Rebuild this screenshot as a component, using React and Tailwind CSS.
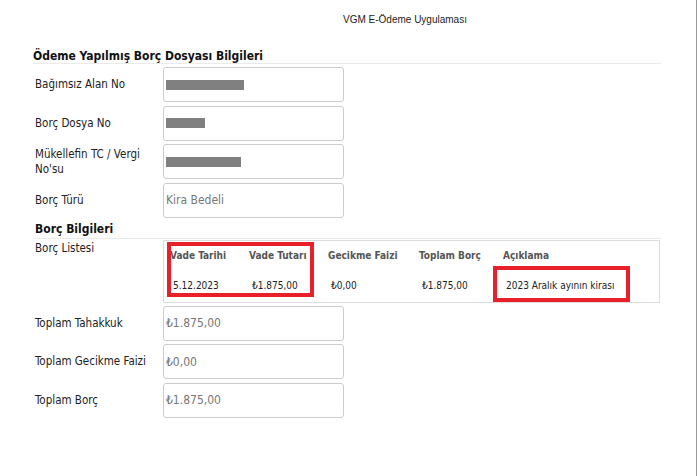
import React from 'react';

const font = { fontFamily: '"DejaVu Sans Condensed", "DejaVu Sans", Verdana, sans-serif' };

const fields = [
  { label: 'Bağımsız Alan No', mask: 'w-[78px]' },
  { label: 'Borç Dosya No', mask: 'w-[39px]' },
  { label: "Mükellefin TC / Vergi No'su", mask: 'w-[75px]' },
  { label: 'Borç Türü', value: 'Kira Bedeli' },
];

const totals = [
  { label: 'Toplam Tahakkuk', value: '₺1.875,00' },
  { label: 'Toplam Gecikme Faizi', value: '₺0,00' },
  { label: 'Toplam Borç', value: '₺1.875,00' },
];

const columns = [
  { head: 'Vade Tarihi', value: '5.12.2023', w: 'w-[79px]' },
  { head: 'Vade Tutarı', value: '₺1.875,00', w: 'w-[79px]' },
  { head: 'Gecikme Faizi', value: '₺0,00', w: 'w-[91px]' },
  { head: 'Toplam Borç', value: '₺1.875,00', w: 'w-[84px]' },
  { head: 'Açıklama', value: '2023 Aralık ayının kirası', w: 'flex-1' },
];

const Row = ({ label, children }) => (
  <div className="flex items-center h-[35px]">
    <div className="w-[128px] text-[11.5px] leading-[15px] text-[#222] pr-2">{label}</div>
    {children}
  </div>
);

const Box = ({ children }) => (
  <div className="w-[181px] h-[35px] border border-[#ccc] rounded-[3px] flex items-center pl-[2px] text-[12px] text-[#777]">
    {children}
  </div>
);

export default function App() {
  return (
    <div className="relative w-[697px] h-[476px] bg-white border-r border-[#999] overflow-hidden" style={font}>
      <div className="pt-[14px] pl-[343px] h-[50px] text-[10px] leading-[12px] text-[#222]" style={{ fontFamily: '"Liberation Sans", Arial, sans-serif' }}>
        VGM E-Ödeme Uygulaması
      </div>

      <div className="pl-[33px] pr-[35px]">
        <h2 className="text-[12px] leading-[13px] font-bold text-[#111] border-b border-[#eaeaea]">
          Ödeme Yapılmış Borç Dosyası Bilgileri
        </h2>

        <div className="flex flex-col gap-[3.5px] mt-[3px] pl-[2px]">
          {fields.map((f) => (
            <Row key={f.label} label={f.label}>
              <Box>
                {f.mask ? <div className={`${f.mask} h-[10px] bg-[#808080]`} /> : f.value}
              </Box>
            </Row>
          ))}
        </div>

        <h2 className="mt-[3px] pl-[2px] text-[12px] leading-[16px] font-bold text-[#111] border-b border-[#eaeaea] pb-[1px]">
          Borç Bilgileri
        </h2>

        <div className="flex pl-[2px] mt-[1px]">
          <div className="w-[128px] text-[11.5px] leading-[15px] text-[#222] pt-[1px]">Borç Listesi</div>
          <div className="w-[497px] h-[63px] border border-[#ddd] pl-[6px]">
            <div className="flex pt-[8px] text-[10px] leading-[14px] font-bold text-[#555]">
              {columns.map((c) => (
                <div key={c.head} className={c.w}>{c.head}</div>
              ))}
            </div>
            <div className="flex pt-[16px] text-[10px] leading-[14px] text-[#222]">
              {columns.map((c) => (
                <div key={c.head} className={`${c.w} pl-[3px]`}>{c.value}</div>
              ))}
            </div>
          </div>
        </div>

        <div className="flex flex-col gap-[3.5px] mt-[3px] pl-[2px]">
          {totals.map((t) => (
            <Row key={t.label} label={t.label}>
              <Box>{t.value}</Box>
            </Row>
          ))}
        </div>
      </div>

      {/* annotation boxes */}
      <div className="absolute left-[167px] top-[242px] w-[147px] h-[55px] border-4 border-[#e8202a]" />
      <div className="absolute left-[493px] top-[266px] w-[137px] h-[36px] border-4 border-[#e8202a]" />
    </div>
  );
}
